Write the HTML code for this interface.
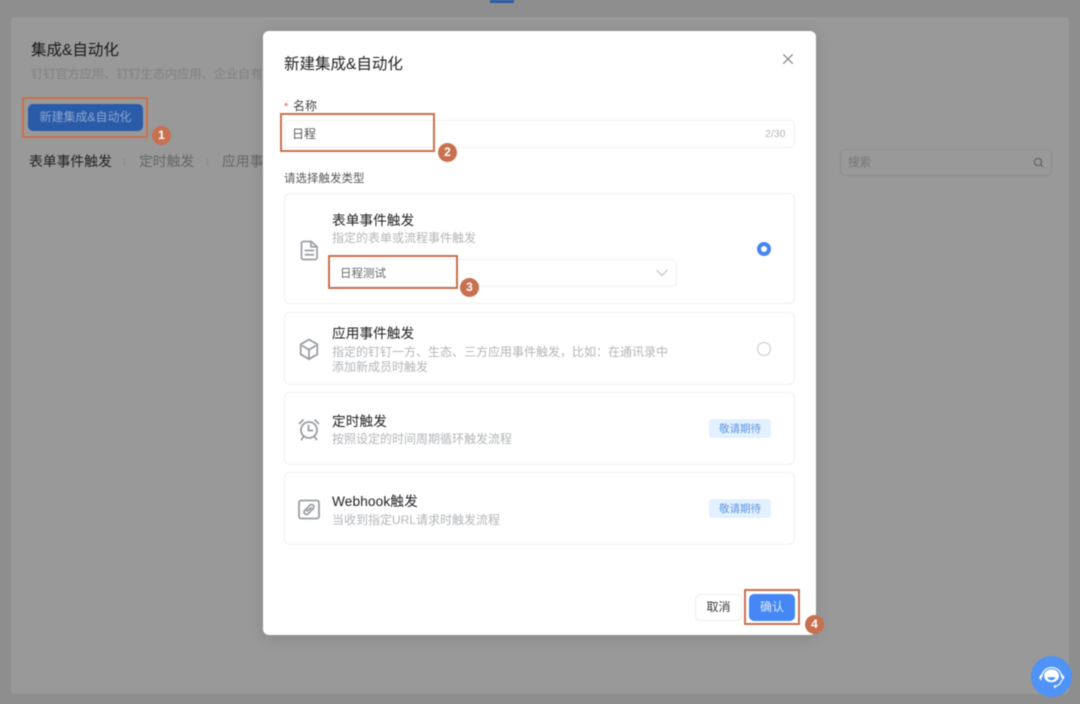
<!DOCTYPE html>
<html lang="zh">
<head>
<meta charset="utf-8">
<style>
html,body{margin:0;padding:0}
body{width:1080px;height:704px;position:relative;overflow:hidden;background:#8e8e8e;font-family:"Liberation Sans","Noto Sans CJK SC",sans-serif}
#w{position:absolute;left:0;top:0;width:1080px;height:704px;filter:blur(.4px)}
.a{position:absolute;white-space:nowrap;box-sizing:border-box}
.panel{left:11px;top:17px;width:1058px;height:677px;background:#999;border-radius:4px}
.modal{left:263px;top:31px;width:553px;height:604px;background:#fff;border-radius:6px;box-shadow:0 2px 16px rgba(0,0,0,.12)}
.card{left:284px;width:511px;background:#fff;border:1.5px solid #f0f0f1;border-radius:6px}
.t{font-size:13.7px;line-height:20px;color:#1f2023}
.s{font-size:12px;line-height:18px;color:#b3b5b8}
.tag{left:709px;width:62px;height:20px;background:#e3f0ff;border-radius:3px;color:#5f97e0;font-size:10.5px;line-height:20px;text-align:center}
.red{border:2.5px solid #c8714f}
.n{width:19px;height:19px;border-radius:50%;background:#c8714f;color:#fff;font-size:12px;font-weight:bold;line-height:19px;text-align:center}
svg{position:absolute;overflow:visible}
</style>
</head>
<body>
<div id="w">
<div class="a" style="left:490px;top:0;width:24px;height:3px;background:#2a5cab"></div>
<div class="a panel"></div>

<div class="a" style="left:31px;top:40px;font-size:15.5px;line-height:21px;color:#191a1c">集成&amp;自动化</div>
<div class="a" style="left:31px;top:65px;font-size:12.2px;line-height:18px;color:#818283">钉钉官方应用、钉钉生态内应用、企业自有</div>
<div class="a" style="left:28px;top:104px;width:115px;height:27px;background:#2a5ba8;border-radius:5px;color:#8ba7cf;font-size:12px;line-height:27px;text-align:center">新建集成&amp;自动化</div>
<div class="a red" style="left:22px;top:97px;width:126px;height:41px;background:transparent"></div>
<div class="a n" style="left:152px;top:126px">1</div>

<div class="a" style="left:29px;top:152px;font-size:13.8px;line-height:20px;color:#222">表单事件触发</div>
<div class="a" style="left:124px;top:158px;width:1px;height:8px;background:#8a8a8a"></div>
<div class="a" style="left:139px;top:152px;font-size:13.8px;line-height:20px;color:#666">定时触发</div>
<div class="a" style="left:207px;top:158px;width:1px;height:8px;background:#8a8a8a"></div>
<div class="a" style="left:222px;top:152px;font-size:13.8px;line-height:20px;color:#666">应用事</div>

<div class="a" style="left:840px;top:149px;width:212px;height:27px;border:1px solid #8c8c8c;border-radius:5px"></div>
<div class="a" style="left:848px;top:154px;font-size:11.5px;line-height:18px;color:#767676">搜索</div>
<svg style="left:1033px;top:157px" width="11" height="11" viewBox="0 0 11 11" fill="none" stroke="#5e5e5e" stroke-width="1.1"><circle cx="5" cy="5" r="3.6"/><path d="M7.7 7.7L9.800 9.800"/></svg>

<div class="a modal"></div>
<div class="a" style="left:284px;top:54px;font-size:15.500px;line-height:21px;color:#1f2023">新建集成&amp;自动化</div>
<svg style="left:783px;top:54px" width="10" height="10" viewBox="0 0 10 10" fill="none" stroke="#7d8085" stroke-width="1.100"><path d="M.3.3l9.400 9.400M9.700.3L.3 9.700"/></svg>

<div class="a" style="left:284px;top:100px;font-size:11px;line-height:14px;color:#e8683c">*</div>
<div class="a" style="left:293px;top:97px;font-size:12px;line-height:18px;color:#45474a">名称</div>
<div class="a" style="left:284px;top:120px;width:511px;height:28px;border:1.500px solid #f0f0f1;border-radius:5px"></div>
<div class="a" style="left:292px;top:125px;font-size:12px;line-height:18px;color:#55575a">日程</div>
<div class="a" style="left:765px;top:125px;font-size:10.500px;line-height:18px;color:#b5b6b8">2/30</div>
<div class="a red" style="left:280px;top:113px;width:155px;height:39px"></div>
<div class="a n" style="left:438px;top:143px">2</div>

<div class="a" style="left:284px;top:170px;font-size:11.500px;line-height:18px;color:#55575a">请选择触发类型</div>

<div class="a card" style="top:193px;height:111px"></div>
<svg style="left:301px;top:240px" width="17" height="21" viewBox="0 0 18 21" fill="none" stroke="#9a9ea4" stroke-width="1.800" stroke-linejoin="round"><path d="M2.500 1h8.500l6 5.500v11.500a2 2 0 0 1-2 2h-12.500a2 2 0 0 1-2-2v-15a2 2 0 0 1 2-2z"/><path d="M10.500 1v5.500h6.500M4 10.500h10M4 15h10"/></svg>
<div class="a t" style="left:332px;top:211px">表单事件触发</div>
<div class="a s" style="left:332px;top:229px">指定的表单或流程事件触发</div>
<div class="a" style="left:329px;top:259px;width:348px;height:28px;border:1.500px solid #f0f0f1;border-radius:5px"></div>
<div class="a" style="left:340px;top:265px;font-size:11.500px;line-height:18px;color:#66686b">日程测试</div>
<svg style="left:656px;top:269px" width="12" height="8" viewBox="0 0 12 8" fill="none" stroke="#bdbfc2" stroke-width="1.200"><path d="M.5 1l5.500 5.500L11.500 1"/></svg>
<div class="a red" style="left:328px;top:255px;width:130px;height:34px"></div>
<div class="a n" style="left:460px;top:278px">3</div>
<div class="a" style="left:757px;top:242px;width:14px;height:14px;border-radius:50%;border:4px solid #4585f0;background:#fff"></div>

<div class="a card" style="top:312px;height:73px"></div>
<svg style="left:299px;top:338px" width="20" height="23" viewBox="0 0 20 23" fill="none" stroke="#9a9ea4" stroke-width="1.800" stroke-linejoin="round"><path d="M10 1.500l8.300 4.800v10L10 21.200 1.700 16.300v-10z"/><path d="M3 7.500l7 4.200 7-4.200M10 11.700V20"/></svg>
<div class="a t" style="left:332px;top:324px">应用事件触发</div>
<div class="a s" style="left:332px;top:343px">指定的钉钉一方、生态、三方应用事件触发，比如：在通讯录中</div>
<div class="a s" style="left:332px;top:358px">添加新成员时触发</div>
<div class="a" style="left:757px;top:342px;width:14px;height:14px;border-radius:50%;border:1.500px solid #c6c7c9;background:#fff"></div>

<div class="a card" style="top:392px;height:73px"></div>
<svg style="left:298px;top:418px" width="22" height="23" viewBox="0 0 22 23" fill="none" stroke="#9a9ea4" stroke-width="1.800" stroke-linecap="round"><circle cx="11" cy="12" r="8"/><path d="M10.500 7.500v5h4M1.500 5.500L5 2M20.500 5.500L17 2M5.500 18.500l-2 3M16.500 18.500l2 3"/></svg>
<div class="a t" style="left:332px;top:412px">定时触发</div>
<div class="a s" style="left:332px;top:430px">按照设定的时间周期循环触发流程</div>
<div class="a tag" style="top:419px;height:19px">敬请期待</div>

<div class="a card" style="top:472px;height:73px"></div>
<svg style="left:298px;top:499px" width="22" height="21" viewBox="0 0 22 21" fill="none" stroke="#9a9ea4" stroke-width="1.800" stroke-linecap="round"><rect x="1" y="1.500" width="20" height="18" rx="2"/><path d="M10 8l1.800-1.800a2.400 2.400 0 0 1 3.400 3.400L13 11.800M12 13l-1.800 1.800a2.400 2.400 0 0 1-3.400-3.400L9 9.200M9 12l4-3"/></svg>
<div class="a t" style="left:332px;top:492px;letter-spacing:.1px">Webhook触发</div>
<div class="a s" style="left:332px;top:511px">当收到指定URL请求时触发流程</div>
<div class="a tag" style="top:499px;height:19px">敬请期待</div>

<div class="a" style="left:695px;top:594px;width:47px;height:27px;border:1px solid #eeeeef;border-radius:5px;background:#fff;color:#3a3c3f;font-size:12px;line-height:25px;text-align:center">取消</div>
<div class="a" style="left:749px;top:594px;width:46px;height:27px;border-radius:5px;background:#4487f5;color:#dce9fd;font-size:12px;line-height:27px;text-align:center">确认</div>
<div class="a red" style="left:744px;top:589px;width:56px;height:36px"></div>
<div class="a n" style="left:805px;top:615px">4</div>

<div class="a" style="left:1031px;top:656px;width:41px;height:41px;border-radius:50%;background:#4f93f7"></div>
<svg style="left:1038px;top:663px" width="27" height="27" viewBox="0 0 27 27" fill="none">
<path d="M3.700 14.500a10 10 0 0 1 20 0" stroke="#fff" stroke-width="1.300"/>
<ellipse cx="13.500" cy="12.800" rx="7.500" ry="6.500" fill="#fff"/>
<path d="M9.500 14.300h8c-.8 2.300-2.400 3-4 3s-3.200-.7-4-3z" fill="#4f93f7"/>
<path d="M2.800 12.500l-1.300 2 1.300 2zM24.600 12.500l1.300 2-1.300 2z" fill="#fff" stroke="#fff"/>
<path d="M23.600 17c-.5 3-2.700 5.500-6 6" stroke="#fff" stroke-width="1.100"/>
<circle cx="17" cy="23.500" r="1.300" fill="#fff"/>
</svg>
</div>
</body>
</html>
